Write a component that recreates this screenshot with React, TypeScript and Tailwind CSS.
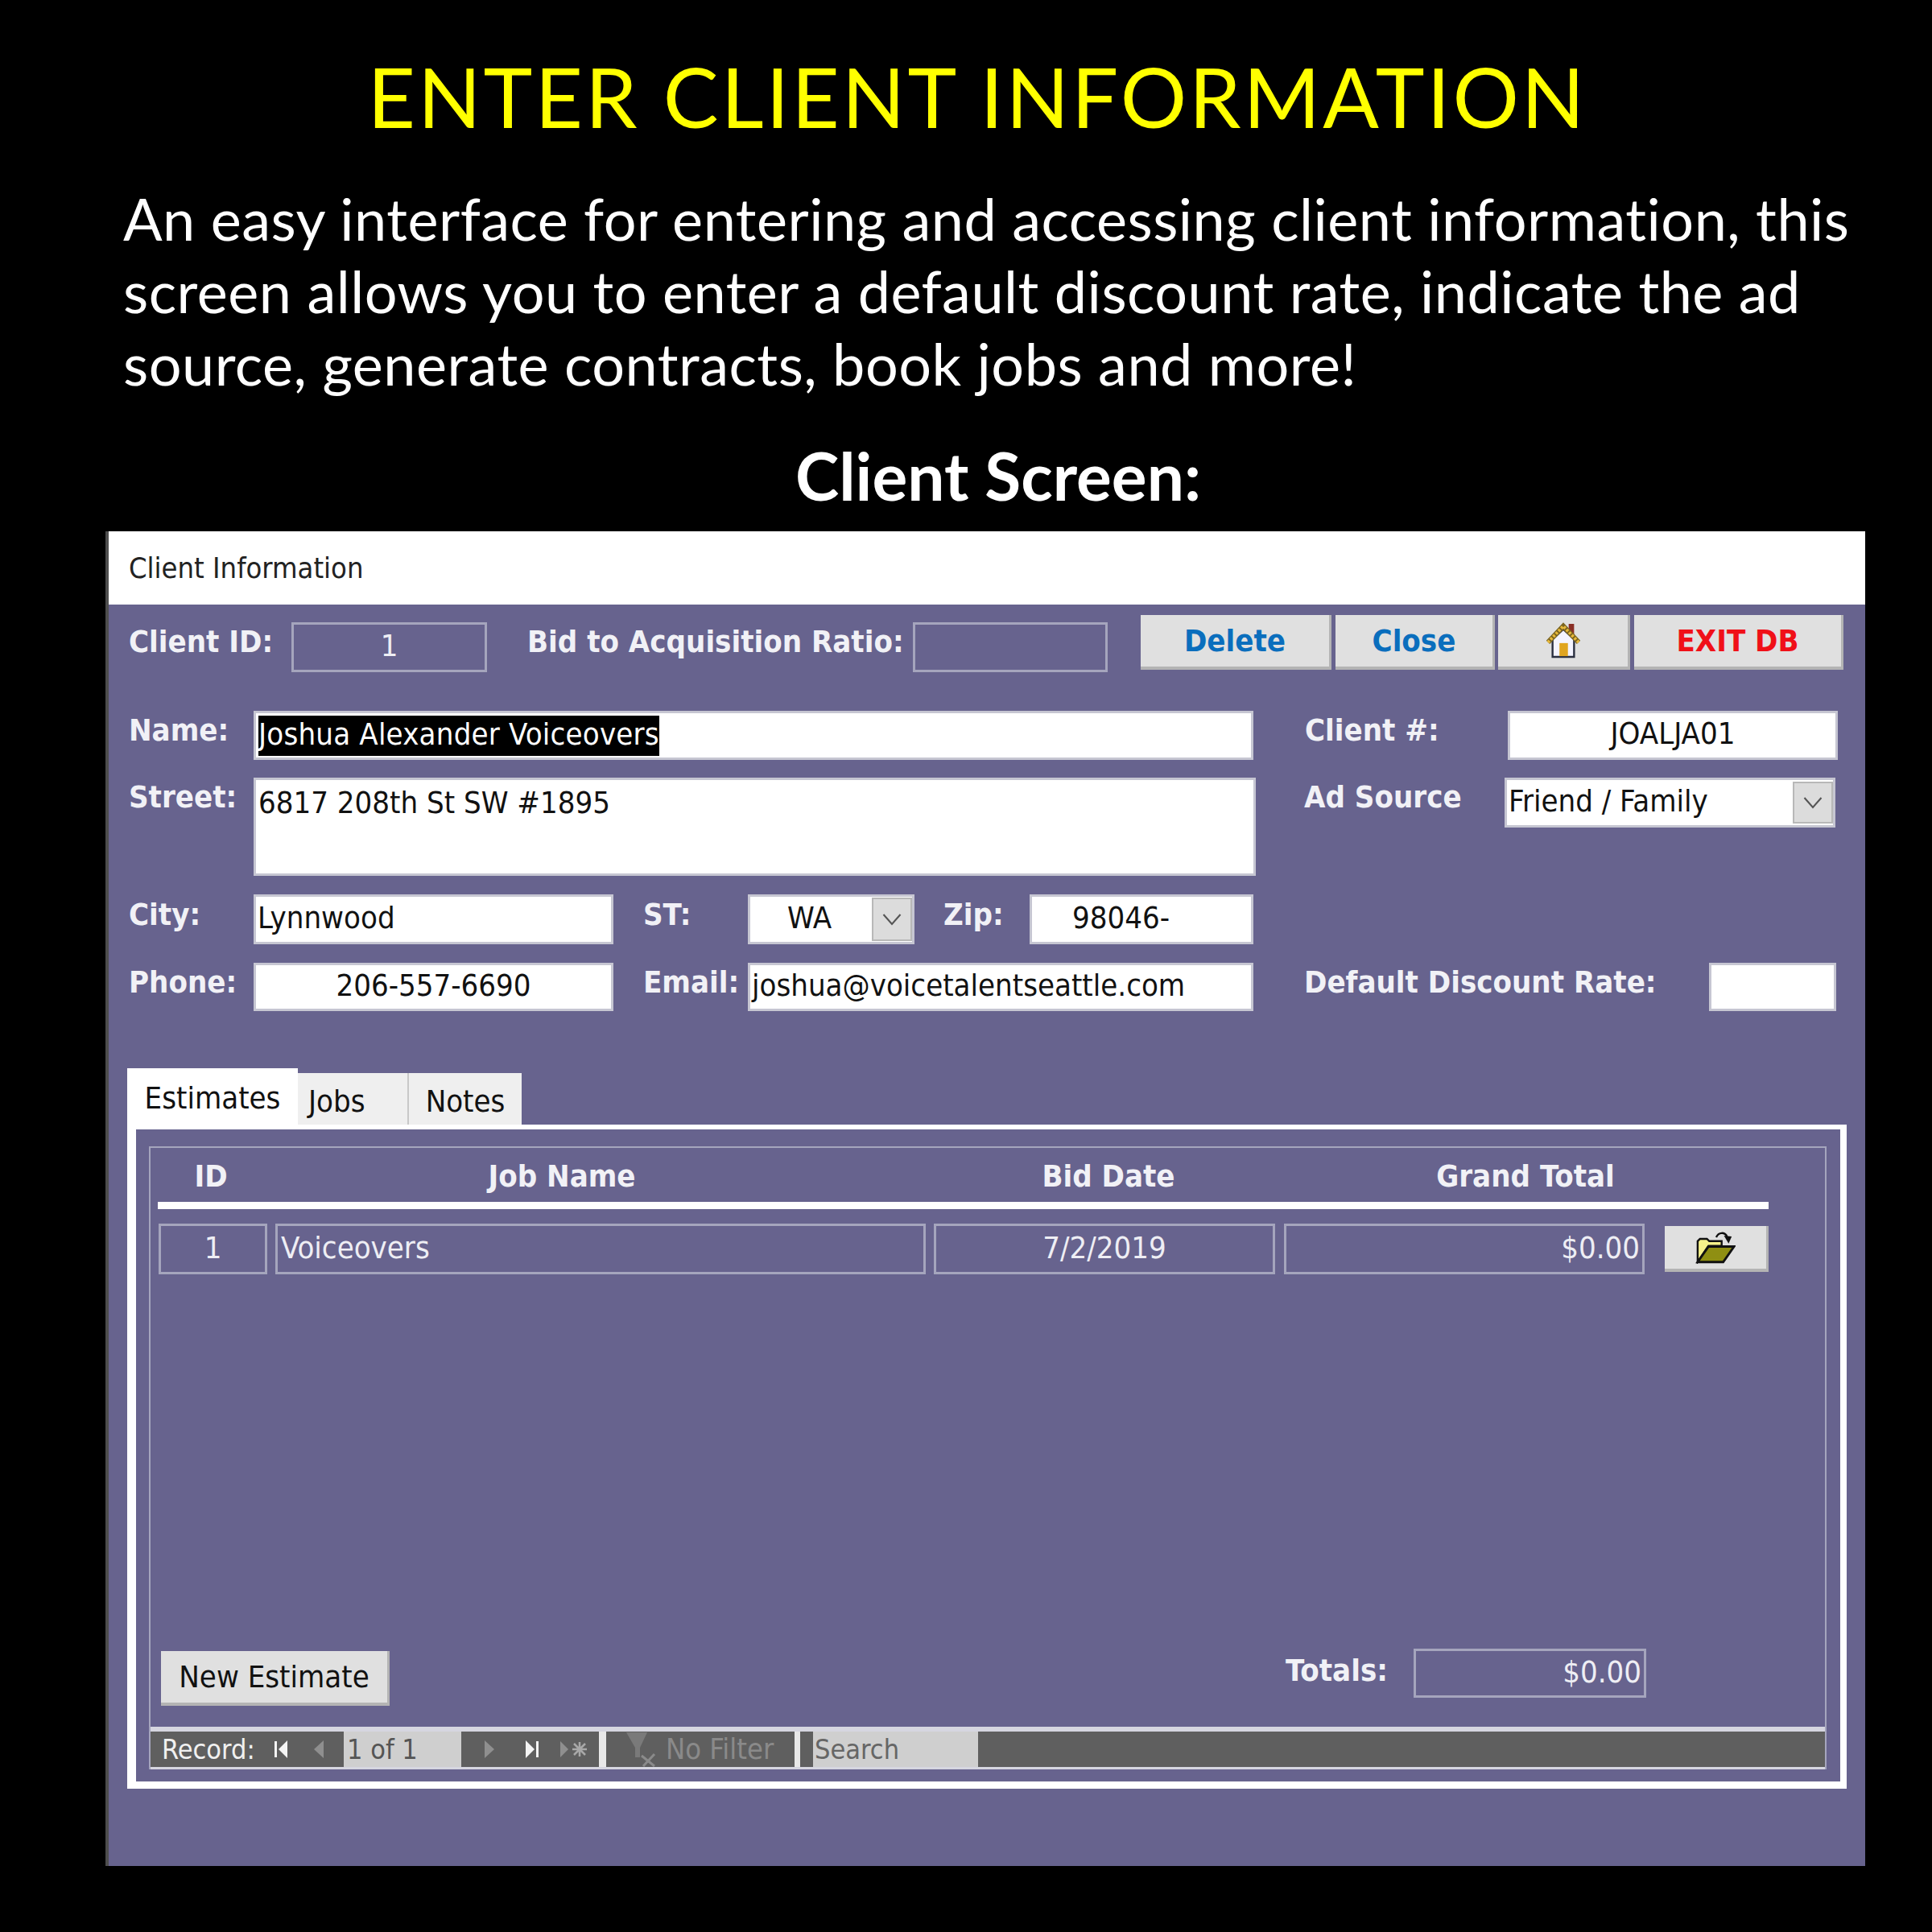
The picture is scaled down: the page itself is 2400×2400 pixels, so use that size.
import React from 'react'

const labelCls = 'shrink-0 flex items-center pb-[12px] font-bold text-[#f1f1f6] whitespace-nowrap'
const inputCls = 'shrink-0 flex items-center pb-[4px] bg-white border-[3px] border-[#c6c6d2] text-[#111] whitespace-nowrap'
const flatCls = 'shrink-0 flex items-center pb-[3px] border-[3px] border-[#a5a5bd] text-[#eeeef4] whitespace-nowrap'
const btnCls = 'shrink-0 flex items-center justify-center bg-[#e0e0e0] border-b-[4px] border-r-[3px] border-[#b4b4b4] font-bold whitespace-nowrap'

function Chevron() {
  return (
    <svg viewBox="0 0 20 20" className="w-[30px] h-[30px]">
      <path d="M3 6 L10 14 L17 6" fill="none" stroke="#555" strokeWidth="1.4" />
    </svg>
  )
}

function HomeIcon() {
  return (
    <svg viewBox="0 0 44 48" className="w-[42px] h-[46px]">
      <path d="M29 2 h7 v18 h-7z" fill="#8a2f26" />
      <path d="M8 22 L22 9 L36 22 V45 H8z" fill="#f4f4ff" stroke="#2b3040" strokeWidth="2.5" />
      <path d="M2 26 L22 5 L42 26" fill="none" stroke="#7a6420" strokeWidth="6.5" />
      <path d="M2 26 L22 5 L42 26" fill="none" stroke="#e8b93a" strokeWidth="4" strokeDasharray="3 2" />
      <rect x="17" y="27" width="11" height="17" fill="#e0a520" />
    </svg>
  )
}

function FolderIcon() {
  return (
    <svg viewBox="0 0 52 42" className="w-[50px] h-[41px]">
      <path d="M27 8 C30 1 38 1 41 7" fill="none" stroke="#111" strokeWidth="2.5" />
      <path d="M37 6 L47 7 L43 16z" fill="#111" />
      <path d="M3 40 V13 L6 10 H15 L18 13 H34 V19 H17z" fill="#f6f28a" stroke="#111" strokeWidth="2.5" />
      <path d="M3 40 L17 20 H50 L36 40z" fill="#8f8f12" stroke="#111" strokeWidth="3" />
    </svg>
  )
}

function NavFirst({ color }: { color: string }) {
  return (
    <svg viewBox="0 0 22 24" className="w-[22px] h-[24px]">
      <rect x="2" y="2" width="3" height="20" fill={color} />
      <path d="M18 1 V23 L7 12z" fill={color} />
    </svg>
  )
}

function NavLast({ color }: { color: string }) {
  return (
    <svg viewBox="0 0 22 24" className="w-[22px] h-[24px]">
      <rect x="17" y="2" width="3" height="20" fill={color} />
      <path d="M4 1 V23 L15 12z" fill={color} />
    </svg>
  )
}

function Tri({ dir }: { dir: 'l' | 'r' }) {
  return (
    <svg viewBox="0 0 14 24" className="w-[14px] h-[24px]">
      <path d={dir === 'l' ? 'M13 1 V23 L1 12z' : 'M1 1 V23 L13 12z'} fill="#8f8f8f" />
    </svg>
  )
}

export default function App() {
  return (
    <div className="w-[2400px] h-[2400px] bg-black overflow-hidden flex flex-col font-['DejaVu_Sans',sans-serif] font-stretch-condensed">
      <h1 className="h-[226px] pl-[28px] pt-[54px] text-center font-['Lato',sans-serif] font-stretch-normal text-[103px] leading-[130px] tracking-[3px] text-[#ffff00] whitespace-nowrap">
        ENTER CLIENT INFORMATION
      </h1>
      <p className="pl-[153px] font-['Lato',sans-serif] font-stretch-normal [font-variant-ligatures:none] text-[72px] leading-[90px] tracking-[0.5px] text-white whitespace-nowrap">
        An easy interface for entering and accessing client information, this
        <br />
        screen allows you to enter a default discount rate, indicate the ad
        <br />
        source, generate contracts, book jobs and more!
      </p>
      <h2 className="mt-[44px] h-[120px] pl-[80px] text-center font-['Lato',sans-serif] font-stretch-normal font-bold text-[82px] leading-[100px] text-white whitespace-nowrap">
        Client Screen:
      </h2>

      {/* access form window */}
      <div className="ml-[131px] w-[2186px] h-[1658px] bg-[#67638e] border-l-[4px] border-[#4e4e4e] flex flex-col text-[38px]">
        <div className="h-[91px] bg-white flex items-center pl-[25px] text-[36px] text-[#222] shrink-0">
          Client Information
        </div>

        <div className="mt-[13px] h-[71px] flex pl-[25px] shrink-0">
          <div className={`${labelCls} w-[202px] pt-[8px]`}>Client ID:</div>
          <div className={`${flatCls} w-[243px] mt-[9px] justify-center`}>1</div>
          <div className={`${labelCls} w-[479px] ml-[50px] pt-[8px]`}>Bid to Acquisition Ratio:</div>
          <div className={`${flatCls} w-[242px] mt-[9px]`} />
          <div className={`${btnCls} w-[237px] ml-[41px] h-[68px] text-[#0a6ebd]`}>Delete</div>
          <div className={`${btnCls} w-[198px] ml-[5px] h-[68px] text-[#0a6ebd]`}>Close</div>
          <div className={`${btnCls} w-[164px] ml-[4px] h-[68px]`}><HomeIcon /></div>
          <div className={`${btnCls} w-[260px] ml-[5px] h-[68px] text-[#f01018]`}>EXIT DB</div>
        </div>

        <div className="mt-[48px] h-[61px] flex pl-[25px] shrink-0">
          <div className={`${labelCls} w-[155px]`}>Name:</div>
          <div className={`${inputCls} w-[1242px] pl-[3px] !pb-0`}>
            <span className="bg-black text-white leading-[47px] tracking-[0.2px] pb-[3px]">Joshua Alexander Voiceovers</span>
          </div>
          <div className={`${labelCls} w-[252px] ml-[64px]`}>Client #:</div>
          <div className={`${inputCls} w-[410px] justify-center`}>JOALJA01</div>
        </div>

        <div className="mt-[22px] h-[122px] flex pl-[25px] shrink-0">
          <div className={`${labelCls} w-[155px] h-[60px]`}>Street:</div>
          <div className={`${inputCls} w-[1245px] h-[122px] !items-start pl-[3px] pt-0`}>6817 208th St SW #1895</div>
          <div className={`${labelCls} w-[249px] ml-[60px] h-[60px]`}>Ad Source</div>
          <div className={`${inputCls} w-[411px] h-[62px] pl-[2px] justify-between !pb-0`}>
            <span className="pb-[3px]">Friend / Family</span>
            <span className="w-[50px] h-[52px] bg-[#dcdcdc] border-2 border-[#b8b8b8] flex items-center justify-center">
              <Chevron />
            </span>
          </div>
        </div>

        <div className="mt-[23px] h-[62px] flex pl-[25px] shrink-0">
          <div className={`${labelCls} w-[155px]`}>City:</div>
          <div className={`${inputCls} w-[447px] pl-[2px]`}>Lynnwood</div>
          <div className={`${labelCls} w-[130px] ml-[37px]`}>ST:</div>
          <div className={`${inputCls} w-[207px] justify-between pl-[46px] !pb-0`}>
            <span className="pb-[3px]">WA</span>
            <span className="w-[50px] h-[54px] bg-[#dcdcdc] border-2 border-[#b8b8b8] flex items-center justify-center">
              <Chevron />
            </span>
          </div>
          <div className={`${labelCls} w-[107px] ml-[36px]`}>Zip:</div>
          <div className={`${inputCls} w-[278px] pl-[50px]`}>98046-</div>
        </div>

        <div className="mt-[23px] h-[60px] flex pl-[25px] shrink-0">
          <div className={`${labelCls} w-[155px]`}>Phone:</div>
          <div className={`${inputCls} w-[447px] justify-center`}>206-557-6690</div>
          <div className={`${labelCls} w-[130px] ml-[37px]`}>Email:</div>
          <div className={`${inputCls} w-[628px] pl-[2px]`}>joshua@voicetalentseattle.com</div>
          <div className={`${labelCls} w-[503px] ml-[63px]`}>Default Discount Rate:</div>
          <div className={`${inputCls} w-[158px]`} />
        </div>

        {/* tabs */}
        <div className="mt-[71px] h-[70px] ml-[23px] flex items-end shrink-0 relative z-10">
          <div className="w-[212px] h-[76px] -mb-[6px] bg-white flex justify-center pt-[9px] text-[38px] text-[#111]">Estimates</div>
          <div className="w-[138px] h-[64px] bg-[#efefef] border-r-2 border-[#c8c8c8] pl-[13px] pt-[6px] flex items-center text-[38px] text-[#111]">Jobs</div>
          <div className="w-[140px] h-[64px] bg-[#efefef] flex items-center justify-center pt-[6px] text-[38px] text-[#111]">Notes</div>
        </div>

        <div className="ml-[23px] w-[2136px] h-[825px] border-t-[6px] border-l-[11px] border-r-[8px] border-b-[9px] border-white pl-[16px] pr-[17px] pt-[21px] pb-[15px] shrink-0 flex">
          <div className="flex-1 border-x-[2px] border-t-[2px] border-[#a5a5bd] flex flex-col">
            <div className="ml-[10px] h-[67px] pt-[3px] flex items-center font-bold text-[#f1f1f6] text-center">
              <div className="w-[130px]">ID</div>
              <div className="w-[742px]">Job Name</div>
              <div className="w-[616px]">Bid Date</div>
              <div className="w-[420px]">Grand Total</div>
            </div>
            <div className="ml-[9px] w-[2001px] h-[9px] bg-white shrink-0" />
            <div className="mt-[18px] ml-[10px] h-[63px] flex shrink-0">
              <div className={`${flatCls} w-[135px] justify-center`}>1</div>
              <div className={`${flatCls} w-[808px] ml-[10px] pl-[4px]`}>Voiceovers</div>
              <div className={`${flatCls} w-[424px] ml-[10px] justify-center`}>7/2/2019</div>
              <div className={`${flatCls} w-[448px] ml-[11px] justify-end pr-[3px]`}>$0.00</div>
              <div className={`${btnCls} w-[129px] h-[57px] ml-[25px] mt-[3px]`}><FolderIcon /></div>
            </div>

            <div className="mt-auto flex pl-[13px] h-[71px] shrink-0">
              <div className={`${btnCls} w-[284px] h-[68px] mt-[3px] !font-normal text-[#111]`}>New Estimate</div>
              <div className={`${labelCls} w-[159px] ml-[1113px] !pb-[16px]`}>Totals:</div>
              <div className={`${flatCls} w-[289px] h-[61px] justify-end pr-[3px]`}>$0.00</div>
            </div>

            {/* record navigation */}
            <div className="mt-[26px] h-[53px] border-t-[6px] border-b-[3px] border-[#d6d6e0] bg-[#5f5f5f] flex text-[34px] shrink-0">
              <div className="w-[240px] flex items-center pl-[14px] text-[#f0f0f0]">
                Record:
                <span className="ml-[22px]"><NavFirst color="#f4f4f4" /></span>
                <span className="ml-[28px]"><Tri dir="l" /></span>
              </div>
              <div className="w-[146px] bg-[#cfcfcf] text-[#555] flex items-center pl-[4px]">1 of 1</div>
              <div className="w-[171px] flex items-center pl-[28px]">
                <Tri dir="r" />
                <span className="ml-[34px]"><NavLast color="#f4f4f4" /></span>
                <svg viewBox="0 0 36 24" className="ml-[24px] w-[36px] h-[24px]">
                  <path d="M1 2 V22 L11 12z" fill="#8f8f8f" />
                  <path d="M25 3 V21 M16 12 H34 M18 5 L32 19 M32 5 L18 19" stroke="#a8a8a8" strokeWidth="2.5" />
                </svg>
              </div>
              <div className="w-[9px] bg-[#e8e8e8]" />
              <div className="w-[234px] flex items-center pl-[24px] gap-[10px] text-[36px] text-[#8a8a8a]">
                <svg viewBox="0 0 40 44" className="w-[40px] h-[44px]">
                  <path d="M1 1 H27 L18 20 V32 H12 V20z" fill="#7a7a7a" />
                  <path d="M20 30 L36 43 M36 28 L22 43" stroke="#8a8a8a" strokeWidth="3" />
                </svg>
                No Filter
              </div>
              <div className="w-[7px] bg-[#e8e8e8]" />
              <div className="w-[16px]" />
              <div className="w-[205px] bg-[#cfcfcf] text-[#666] flex items-center pl-[2px]">Search</div>
            </div>
          </div>
        </div>
      </div>
    </div>
  )
}
